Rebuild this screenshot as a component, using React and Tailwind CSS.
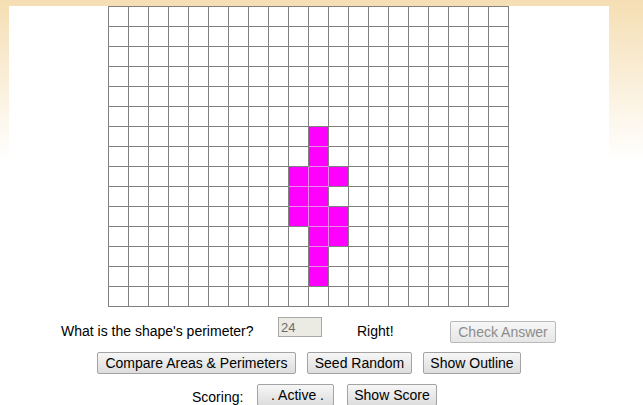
import React from 'react';

const FILLED = new Set([
  '6-10', '7-10',
  '8-9', '8-10', '8-11',
  '9-9', '9-10',
  '10-9', '10-10', '10-11',
  '11-10', '11-11',
  '12-10', '13-10',
]);

const isOn = (r, c) => FILLED.has(`${r}-${c}`);

const Button = ({ children, className = '', disabled = false }) => (
  <button
    type="button"
    disabled={disabled}
    className={`h-[22px] shrink-0 border rounded-[2px] text-[14px] leading-4 py-[2px] text-center whitespace-pre ${
      disabled
        ? 'border-[#b9b9b9] bg-gradient-to-b from-[#f7f7f7] to-[#e6e6e6] text-[#8c8c8c]'
        : 'border-[#a3a3a3] bg-gradient-to-b from-[#f6f6f6] to-[#dddddd] text-black'
    } ${className}`}
  >
    {children}
  </button>
);

const ShapeGrid = () => {
  const cells = [];
  for (let r = 0; r < 15; r++) {
    for (let c = 0; c < 20; c++) {
      const on = isOn(r, c);
      const right = on && isOn(r, c + 1) ? 'border-r-[#e38be3]' : 'border-r-[#808080]';
      const bottom = on && isOn(r + 1, c) ? 'border-b-[#e38be3]' : 'border-b-[#808080]';
      cells.push(
        <div
          key={`${r}-${c}`}
          className={`w-[20px] h-[20px] border-r border-b ${right} ${bottom} ${on ? 'bg-[#ff00ff]' : 'bg-white'}`}
        />
      );
    }
  }
  return (
    <div className="grid grid-cols-[repeat(20,20px)] w-[401px] ml-[99px] border-l border-t border-[#808080]">
      {cells}
    </div>
  );
};

export default function App() {
  return (
    <div className="h-screen overflow-hidden bg-white bg-[linear-gradient(to_bottom,#f5deb3,#ffffff)] bg-no-repeat bg-[length:100%_160px] font-['Liberation_Sans',Arial,sans-serif] text-black">
      <div className="ml-[9px] mt-[6px] w-[600px] bg-white pb-4">
        <ShapeGrid />

        <div className="flex items-start mt-[10px]">
          <span className="w-[269px] shrink-0 pl-[52px] mt-[6px] text-[14px] leading-4 whitespace-nowrap">
            What is the shape's perimeter?
          </span>
          <input
            type="text"
            value="24"
            readOnly
            disabled
            className="w-[44px] h-[20px] shrink-0 border border-[#a9a9a9] bg-[#ebebe4] px-[2px] text-[13px] text-[#6b6b6b]"
          />
          <span className="w-[128px] shrink-0 pl-[35px] mt-[6px] text-[14px] leading-4">Right!</span>
          <Button disabled className="w-[106px] mt-[4px]">Check Answer</Button>
        </div>

        <div className="flex justify-center gap-[11px] mt-[9px]">
          <Button className="w-[199px]">Compare Areas &amp; Perimeters</Button>
          <Button className="w-[105px]">Seed Random</Button>
          <Button className="w-[98px]">Show Outline</Button>
        </div>

        <div className="flex items-start pl-[183px] mt-[10px]">
          <span className="w-[65px] shrink-0 mt-[5px] text-[14px] leading-4">Scoring:</span>
          <Button className="w-[77px] pl-[4px]">{'. Active .'}</Button>
          <Button className="w-[90px] ml-[13px]">Show Score</Button>
        </div>
      </div>
    </div>
  );
}
